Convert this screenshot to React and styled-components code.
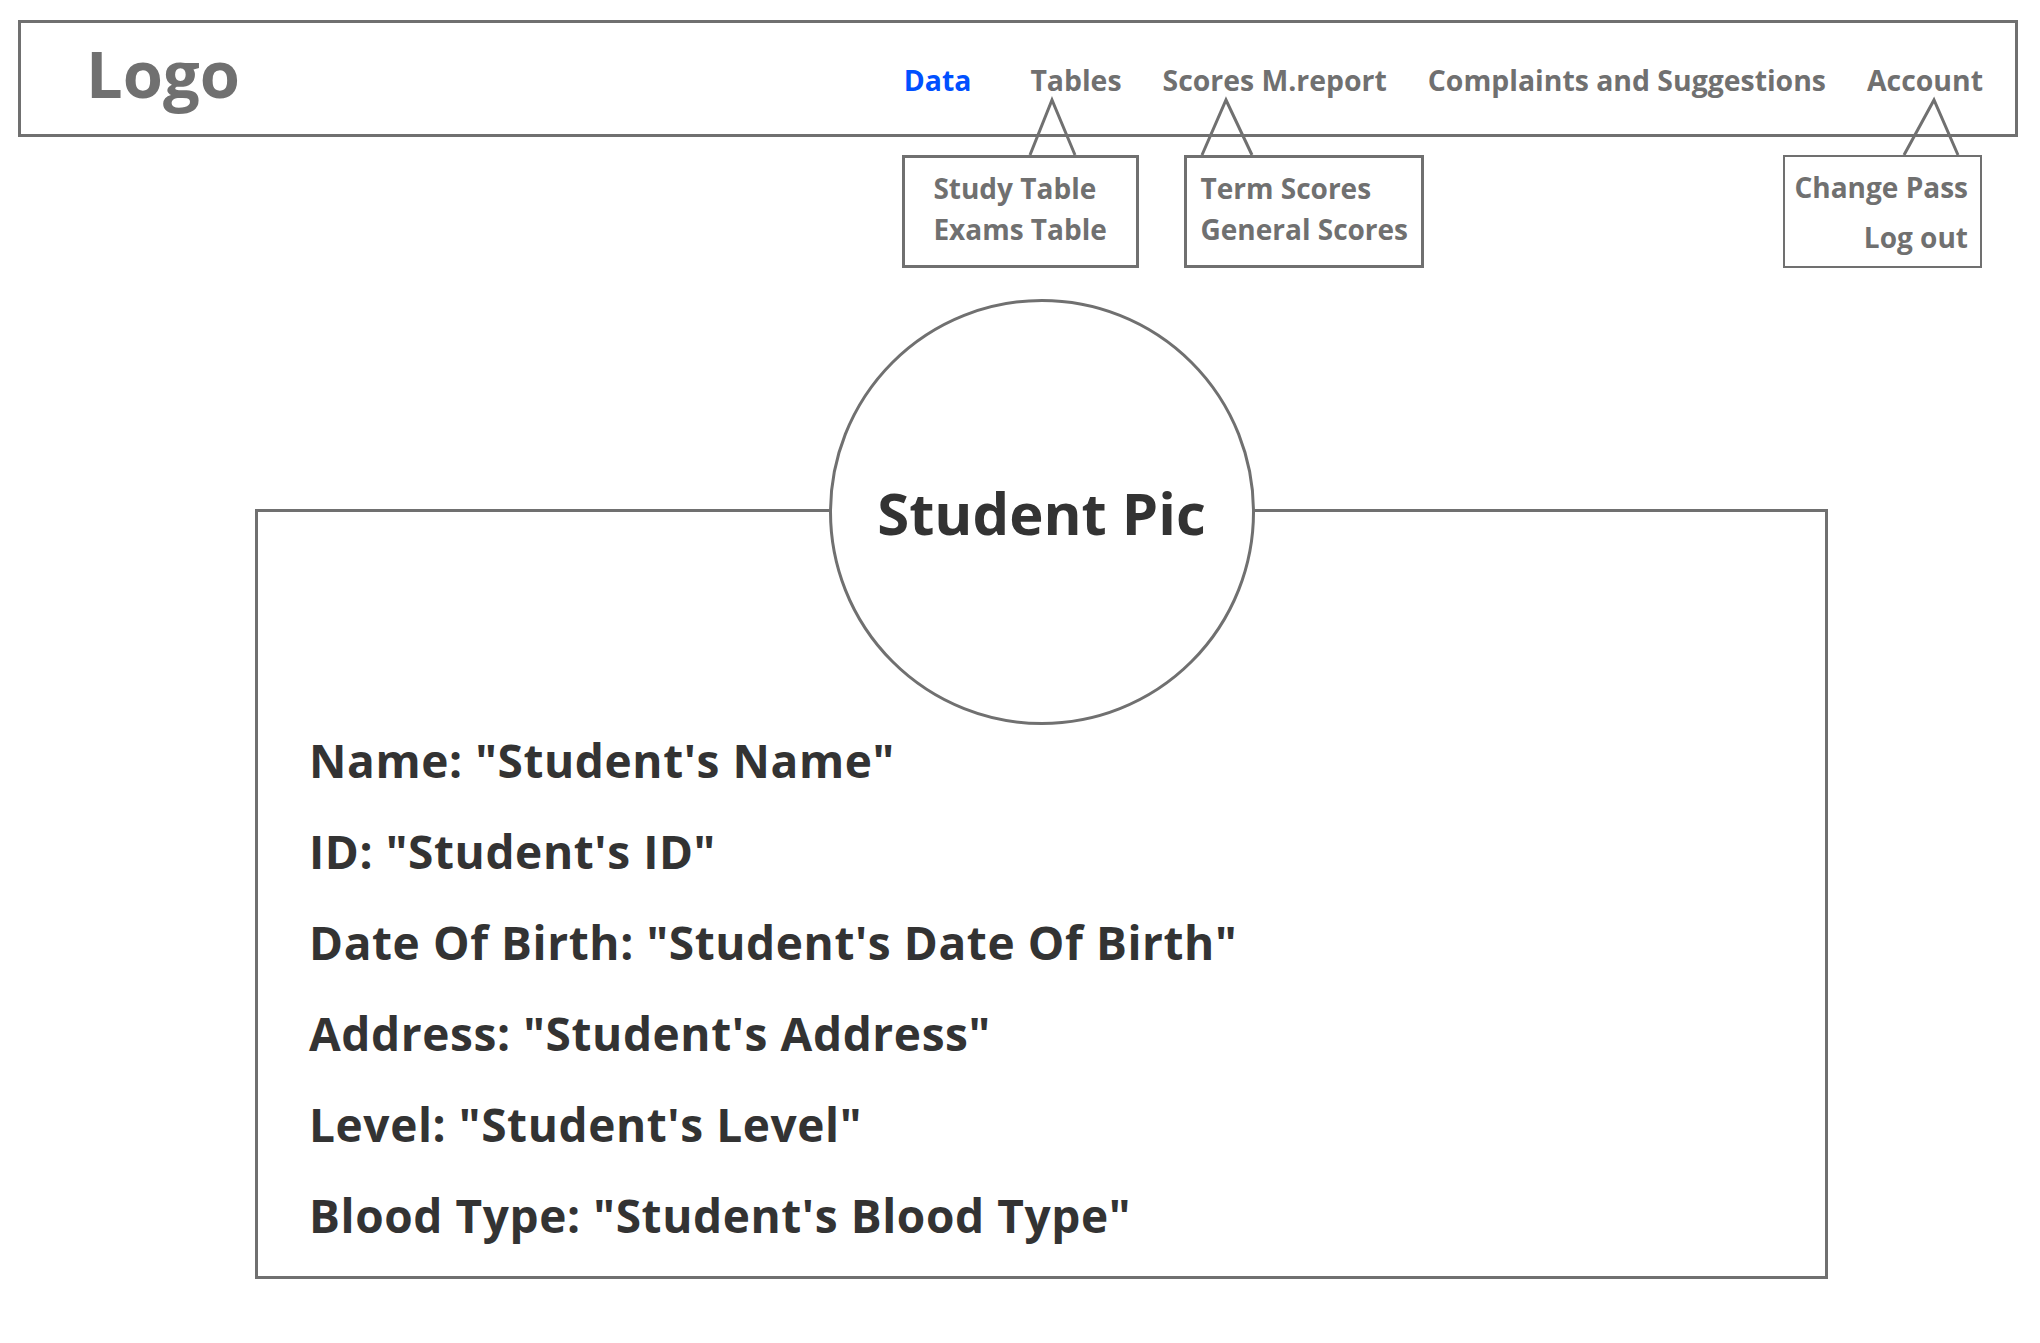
import React from "react";
import styled, { createGlobalStyle } from "styled-components";

const GlobalStyle = createGlobalStyle`
  html, body {
    margin: 0;
    padding: 0;
    background: #ffffff;
  }
  body {
    font-family: "Open Sans", "Noto Sans", sans-serif;
  }
`;

const LINE = "#707070";
const TEXT_GREY = "#707070";
const TEXT_DARK = "#333333";

const Page = styled.div`
  width: 2040px;
  min-height: 1343px;
  box-sizing: border-box;
  padding: 20px 22px 0 18px;
`;

const Header = styled.header`
  height: 117px;
  box-sizing: border-box;
  border: 3px solid ${LINE};
  display: flex;
  align-items: flex-start;
  justify-content: space-between;
  padding: 0 32px 0 65px;
`;

const Logo = styled.div`
  margin-top: 8px;
  font-size: 65px;
  line-height: 84px;
  font-weight: 700;
  color: ${TEXT_GREY};
`;

const Nav = styled.nav`
  display: flex;
  gap: 41px;
  margin-top: 37px;
`;

const NavItem = styled.div`
  position: relative;
  font-size: 28.4px;
  line-height: 40px;
  font-weight: 700;
  white-space: nowrap;
  color: ${(p) => (p.active ? "#0050ff" : TEXT_GREY)};
  margin-right: ${(p) => (p.active ? "18px" : "0")};
`;

const Caret = styled.svg`
  position: absolute;
  top: 100%;
  left: 0;
  overflow: visible;
`;

const Menu = styled.div`
  position: absolute;
  top: calc(100% + 55px);
  left: ${(p) => p.left}px;
  width: ${(p) => p.width}px;
  height: 113px;
  box-sizing: border-box;
  border: ${(p) => p.border || 3}px solid ${LINE};
  background: #fff;
  padding: ${(p) => p.pad};
  display: flex;
  flex-direction: column;
  align-items: ${(p) => (p.right ? "flex-end" : "flex-start")};
`;

const MenuLink = styled.div`
  font-size: 28px;
  line-height: ${(p) => p.lh}px;
  font-weight: 700;
  color: ${TEXT_GREY};
  white-space: nowrap;
`;

const Section = styled.main`
  padding-left: 237px;
`;

const Card = styled.section`
  margin-top: 372px;
  width: 1573px;
  height: 770px;
  box-sizing: border-box;
  border: 3px solid ${LINE};
  display: flex;
  flex-direction: column;
  padding-left: 51px;
`;

const Avatar = styled.div`
  align-self: center;
  margin-top: -213px;
  margin-left: -51px;
  width: 426px;
  height: 426px;
  box-sizing: border-box;
  border-radius: 50%;
  border: 3px solid ${LINE};
  background: #fff;
  display: flex;
  align-items: center;
  justify-content: center;
  font-size: 58px;
  font-weight: 700;
  color: ${TEXT_DARK};
`;

const InfoList = styled.div`
  display: flex;
  flex-direction: column;
  gap: 21px;
`;

const InfoRow = styled.div`
  font-size: 46px;
  line-height: 70px;
  font-weight: 700;
  letter-spacing: 0.6px;
  color: ${TEXT_DARK};
  white-space: nowrap;
`;

const menus = {
  Tables: {
    caret: [0, 22, 45],
    left: -128,
    width: 237,
    pad: "10px 0 0 28px",
    lh: 41,
    items: ["Study Table", "Exams Table"],
  },
  "Scores M.report": {
    caret: [39, 63, 89],
    left: 21,
    width: 240,
    pad: "10px 0 0 14px",
    lh: 41,
    items: ["Term Scores", "General Scores"],
  },
  Account: {
    caret: [37, 67, 91],
    left: -84,
    width: 199,
    border: 2,
    right: true,
    pad: "5px 12px 0 0",
    lh: 50,
    items: ["Change Pass", "Log out"],
  },
};

const navItems = ["Data", "Tables", "Scores M.report", "Complaints and Suggestions", "Account"];

const rows = [
  'Name: "Student\'s Name"',
  'ID: "Student\'s ID"',
  'Date Of Birth: "Student\'s Date Of Birth"',
  'Address: "Student\'s Address"',
  'Level: "Student\'s Level"',
  'Blood Type: "Student\'s Blood Type"',
];

const Dropdown = ({ m }) => {
  const [a, b, c] = m.caret;
  return (
    <>
      <Caret width="1" height="55">
        <polyline points={`${a},55 ${b},0 ${c},55`} fill="none" stroke={LINE} strokeWidth="3" />
      </Caret>
      <Menu left={m.left} width={m.width} border={m.border} pad={m.pad} right={m.right}>
        {m.items.map((t) => (
          <MenuLink key={t} lh={m.lh}>{t}</MenuLink>
        ))}
      </Menu>
    </>
  );
};

export default function App() {
  return (
    <Page>
      <GlobalStyle />
      <Header>
        <Logo>Logo</Logo>
        <Nav>
          {navItems.map((n, i) => (
            <NavItem key={n} active={i === 0}>
              {n}
              {menus[n] && <Dropdown m={menus[n]} />}
            </NavItem>
          ))}
        </Nav>
      </Header>
      <Section>
        <Card>
          <Avatar>Student Pic</Avatar>
          <InfoList>
            {rows.map((r) => (
              <InfoRow key={r}>{r}</InfoRow>
            ))}
          </InfoList>
        </Card>
      </Section>
    </Page>
  );
}
